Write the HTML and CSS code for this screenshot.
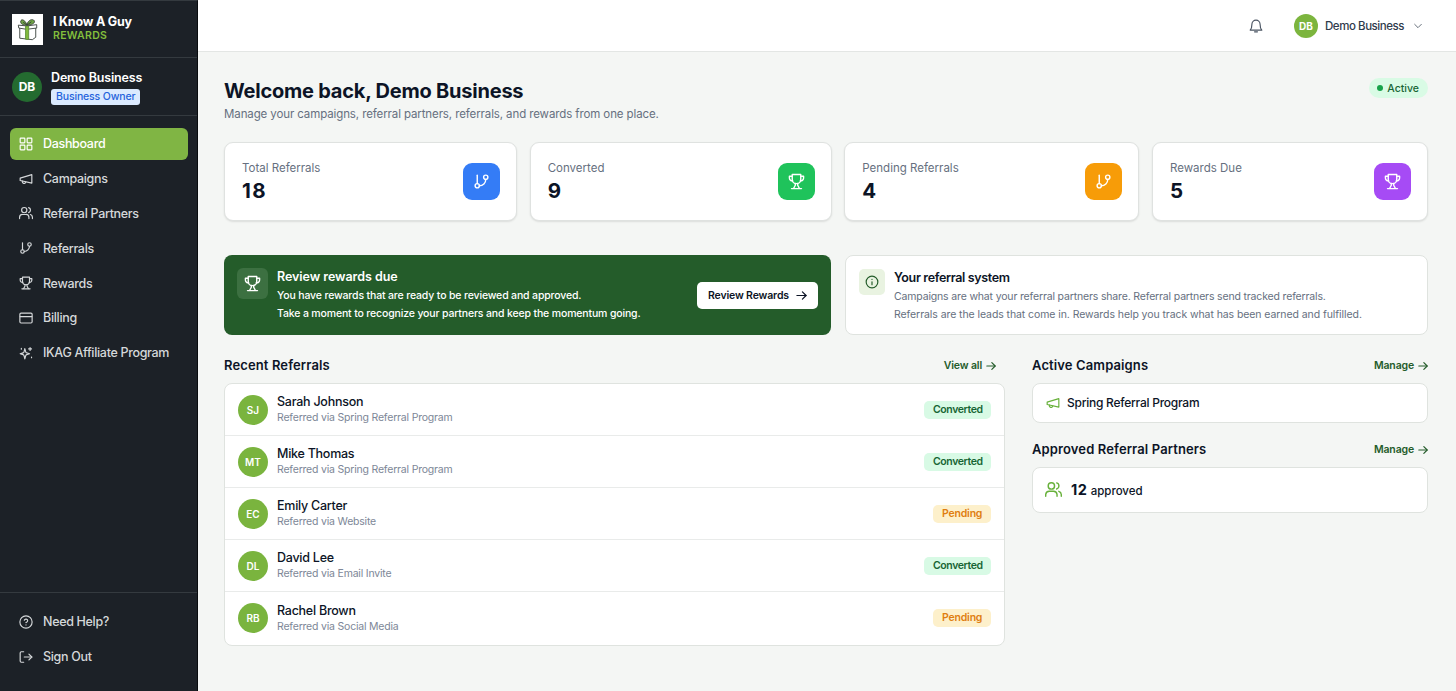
FILE: index.html
```html
<!DOCTYPE html>
<html lang="en">
<head>
<meta charset="utf-8">
<title>I Know A Guy Rewards</title>
<link rel="stylesheet" href="styles.css">
</head>
<body>
<svg class="defs" aria-hidden="true">
  <symbol id="grid" viewBox="0 0 24 24"><rect x="2" y="2" width="8" height="8" rx="1"/><rect x="14" y="2" width="8" height="8" rx="1"/><rect x="14" y="14" width="8" height="8" rx="1"/><rect x="2" y="14" width="8" height="8" rx="1"/></symbol>
  <symbol id="megaphone" viewBox="0 0 24 24"><path d="m2 10.500 20-6v14.500L2 14.500v-4z"/><path d="M11.600 17.300a3 3 0 1 1-5.800-1.600"/></symbol>
  <symbol id="users" viewBox="0 0 24 24"><path d="M17 21.500v-2.500a5 5 0 0 0-5-4.500H6a5 5 0 0 0-5 4.500v2.500"/><circle cx="9" cy="7" r="4.500"/><path d="M23 21.500v-2.500a5 5 0 0 0-3.500-4.400"/><path d="M16.500 2.700a4.500 4.500 0 0 1 0 8.600"/></symbol>
  <symbol id="branch" viewBox="0 0 24 24"><path d="M6 3v12"/><circle cx="18" cy="6" r="3"/><circle cx="6" cy="18" r="3"/><path d="M18 9a9 9 0 0 1-9 9"/></symbol>
  <symbol id="trophy" viewBox="0 0 24 24"><path d="M6 4.500H2V7a4 4 0 0 0 4.500 4"/><path d="M18 4.500h4V7a4 4 0 0 1-4.500 4"/><path d="M5 22h14"/><path d="M10.300 14.800v2.500L8 21.500M13.700 14.800v2.500l2.300 4.200"/><path d="M18 2H6v7a6 6 0 0 0 12 0V2Z"/></symbol>
  <symbol id="card" viewBox="0 0 24 24"><rect x="1.500" y="3.500" width="21" height="17" rx="2"/><path d="M2 9.500h20"/></symbol>
  <symbol id="sparkles" viewBox="0 0 24 24"><path d="M10 4.500 8.600 10a2.500 2.500 0 0 1-1.700 1.700L2 13.200l4.900 1.500a2.500 2.500 0 0 1 1.700 1.700L10 22l1.500-5.600a2.500 2.500 0 0 1 1.700-1.700l4.900-1.500-4.900-1.500a2.500 2.500 0 0 1-1.700-1.700Z"/><path d="M19 2.500v5M21.500 5h-5M4 4v1.500M21.500 19v1"/></symbol>
  <symbol id="help" viewBox="0 0 24 24"><circle cx="12" cy="12" r="10.500"/><path d="M9.090 9a3 3 0 0 1 5.830 1c0 2-3 3-3 3"/><path d="M12 17h.01"/></symbol>
  <symbol id="logout" viewBox="0 0 24 24"><path d="M8 21H4a2 2 0 0 1-2-2V5a2 2 0 0 1 2-2h4"/><path d="m17 17 5-5-5-5"/><path d="M22 12H9"/></symbol>
  <symbol id="bell" viewBox="0 0 24 24"><path d="M5 9a7 7 0 0 1 14 0c0 7 3 10 3 10H2s3-3 3-10"/><path d="M9.500 22h5"/></symbol>
  <symbol id="chevron" viewBox="0 0 24 24"><path d="m4 8 8 8 8-8"/></symbol>
  <symbol id="info" viewBox="0 0 24 24"><circle cx="12" cy="12" r="10"/><path d="M12 16.500v-5M12 7.500h.01"/></symbol>
  <symbol id="arrow" viewBox="0 0 24 24"><path d="M2 12h20"/><path d="m14 4 8 8-8 8"/></symbol>
</svg>

<div class="app">
  <aside class="sidebar">
    <div class="brand">
      <svg class="logo" viewBox="0 0 32 32">
        <g fill="none" stroke="#333b36" stroke-width=".9" stroke-linejoin="round">
          <path d="M8 14.500v10.500l13 1.500L24.500 24V14" fill="#fff"/>
          <path d="m6.500 11.500 9 .8 10-1.300v3.500L15 15.800 7 14.500Z" fill="#fff"/>
          <path d="m14 12.500 3.200-.3V26.300L14 26Z" fill="#83bb3d" stroke="#5d8f37"/>
          <path d="M15.500 11.500C12 11.500 8.500 10.500 9 7.500c.5-2.500 4-2 6.500 3.500 1-5 6-6.500 7.500-4 1.200 2.500-3 4.500-7.500 4.500Z" fill="#6fa544"/>
          <path d="M15.500 11.500 11.500 8.500m4 3 4.500-3.500"/>
        </g>
      </svg>
      <div class="brand-text"><div class="brand-name">I Know A Guy</div><div class="brand-sub">REWARDS</div></div>
    </div>
    <div class="account">
      <div class="account-avatar">DB</div>
      <div><div class="account-name">Demo Business</div><div class="role">Business Owner</div></div>
    </div>
    <nav class="nav">
      <a class="nav-item active"><svg class="icon"><use href="#grid"/></svg><span>Dashboard</span></a>
      <a class="nav-item"><svg class="icon"><use href="#megaphone"/></svg><span>Campaigns</span></a>
      <a class="nav-item"><svg class="icon"><use href="#users"/></svg><span>Referral Partners</span></a>
      <a class="nav-item"><svg class="icon"><use href="#branch"/></svg><span>Referrals</span></a>
      <a class="nav-item"><svg class="icon"><use href="#trophy"/></svg><span>Rewards</span></a>
      <a class="nav-item"><svg class="icon"><use href="#card"/></svg><span>Billing</span></a>
      <a class="nav-item"><svg class="icon"><use href="#sparkles"/></svg><span>IKAG Affiliate Program</span></a>
    </nav>
    <div class="nav nav-bottom">
      <a class="nav-item"><svg class="icon"><use href="#help"/></svg><span>Need Help?</span></a>
      <a class="nav-item"><svg class="icon"><use href="#logout"/></svg><span>Sign Out</span></a>
    </div>
  </aside>

  <div class="page">
    <header class="topbar">
      <svg class="icon bell"><use href="#bell"/></svg>
      <div class="user"><div class="user-avatar">DB</div><span class="user-name">Demo Business</span><svg class="icon chevron"><use href="#chevron"/></svg></div>
    </header>
    <main class="content">
      <div class="intro">
        <div><h1>Welcome back, Demo Business</h1><p class="lead">Manage your campaigns, referral partners, referrals, and rewards from one place.</p></div>
        <span class="status"><i class="dot"></i>Active</span>
      </div>

      <section class="stats">
        <div class="stat"><div><div class="stat-label">Total Referrals</div><div class="stat-value">18</div></div><div class="tile blue"><svg class="icon"><use href="#branch"/></svg></div></div>
        <div class="stat"><div><div class="stat-label">Converted</div><div class="stat-value">9</div></div><div class="tile green"><svg class="icon"><use href="#trophy"/></svg></div></div>
        <div class="stat"><div><div class="stat-label">Pending Referrals</div><div class="stat-value">4</div></div><div class="tile orange"><svg class="icon"><use href="#branch"/></svg></div></div>
        <div class="stat"><div><div class="stat-label">Rewards Due</div><div class="stat-value">5</div></div><div class="tile purple"><svg class="icon"><use href="#trophy"/></svg></div></div>
      </section>

      <section class="notices">
        <div class="review">
          <div class="review-icon"><svg class="icon"><use href="#trophy"/></svg></div>
          <div class="notice-text"><h2 class="notice-title">Review rewards due</h2><p>You have rewards that are ready to be reviewed and approved.<br>Take a moment to recognize your partners and keep the momentum going.</p></div>
          <button class="review-button"><span>Review Rewards</span><svg class="icon"><use href="#arrow"/></svg></button>
        </div>
        <div class="system">
          <div class="system-icon"><svg class="icon"><use href="#info"/></svg></div>
          <div class="notice-text"><h2 class="notice-title">Your referral system</h2><p><span class="tight">Campaigns are what your referral partners share. Referral partners send tracked referrals.</span><br>Referrals are the leads that come in. Rewards help you track what has been earned and fulfilled.</p></div>
        </div>
      </section>

      <section class="columns">
        <div class="recent">
          <div class="section-head"><h2>Recent Referrals</h2><a class="link"><span>View all</span><svg class="icon"><use href="#arrow"/></svg></a></div>
          <div class="list">
            <div class="row"><div class="avatar">SJ</div><div class="person"><div class="name">Sarah Johnson</div><div class="via">Referred via Spring Referral Program</div></div><span class="badge converted">Converted</span></div>
            <div class="row"><div class="avatar">MT</div><div class="person"><div class="name">Mike Thomas</div><div class="via">Referred via Spring Referral Program</div></div><span class="badge converted">Converted</span></div>
            <div class="row"><div class="avatar">EC</div><div class="person"><div class="name">Emily Carter</div><div class="via">Referred via Website</div></div><span class="badge pending">Pending</span></div>
            <div class="row"><div class="avatar">DL</div><div class="person"><div class="name">David Lee</div><div class="via">Referred via Email Invite</div></div><span class="badge converted">Converted</span></div>
            <div class="row"><div class="avatar">RB</div><div class="person"><div class="name">Rachel Brown</div><div class="via">Referred via Social Media</div></div><span class="badge pending">Pending</span></div>
          </div>
        </div>
        <div class="side">
          <div class="section-head"><h2>Active Campaigns</h2><a class="link"><span>Manage</span><svg class="icon"><use href="#arrow"/></svg></a></div>
          <div class="side-card campaign"><svg class="icon"><use href="#megaphone"/></svg><span>Spring Referral Program</span></div>
          <div class="section-head partners-head"><h2>Approved Referral Partners</h2><a class="link"><span>Manage</span><svg class="icon"><use href="#arrow"/></svg></a></div>
          <div class="side-card partners"><svg class="icon"><use href="#users"/></svg><span><b>12</b> approved</span></div>
        </div>
      </section>
    </main>
  </div>
</div>
</body>
</html>
```

FILE: styles.css
```css
* { box-sizing: border-box; }
body { margin: 0; font-family: Inter, "Liberation Sans", sans-serif; color: #0c1426; background: #f4f6f4; }
h1, h2, p { margin: 0; }
.defs { position: absolute; width: 0; height: 0; }
.icon { width: 14px; height: 14px; flex: none; fill: none; stroke: currentColor; stroke-width: 2; stroke-linecap: round; stroke-linejoin: round; }

.app { display: flex; height: 691px; overflow: hidden; }
.sidebar { width: 198px; flex: none; display: flex; flex-direction: column; background: #1c2127; border-right: 1px solid #080b0e; border-top: 1px solid #343a3f; color: #fff; }
.brand { height: 57px; display: flex; align-items: center; gap: 10px; padding-left: 12px; border-bottom: 1px solid #343a3f; }
.logo { width: 31px; height: 31px; background: #fff; }
.brand-text { margin-top: -1px; }
.brand-name { font-size: 12.500px; line-height: 14px; font-weight: 700; letter-spacing: -.2px; }
.brand-sub { font-size: 10.500px; line-height: 13px; font-weight: 600; letter-spacing: .3px; color: #82be3c; }
.account { height: 58px; display: flex; align-items: center; gap: 9px; padding-left: 12px; border-bottom: 1px solid #343a3f; }
.account-avatar { width: 30px; height: 30px; border-radius: 50%; background: #246b30; display: grid; place-items: center; font-size: 12px; font-weight: 700; }
.account-name { font-size: 12.500px; line-height: 16px; margin-top: 1px; font-weight: 600; letter-spacing: -.15px; }
.role { width: max-content; margin-top: 3px; padding: 0 5px; border-radius: 3px; background: #dbeafe; color: #2563dc; font-size: 10.500px; line-height: 16px; font-weight: 500; letter-spacing: -.15px; }
.nav { display: flex; flex-direction: column; gap: 2px; padding: 11.500px 9px 0 10px; }
.nav-item { height: 32.800px; display: flex; align-items: center; gap: 10px; padding-left: 9px; border-radius: 6px; color: #d5d8da; font-size: 12.500px; font-weight: 500; letter-spacing: -.32px; }
.nav-item.active { background: #80b544; color: #fff; }
.nav-bottom { margin-top: auto; height: 99px; padding-top: 12.500px; border-top: 1px solid #343a3f; }

.page { flex: 1; min-width: 0; display: flex; flex-direction: column; }
.topbar { height: 52px; display: flex; align-items: center; justify-content: flex-end; padding-right: 33px; background: #fff; border-bottom: 1px solid #e3e6e4; color: #4b5563; }
.bell { margin-right: 31px; }
.user { display: flex; align-items: center; }
.user-avatar { width: 24px; height: 24px; border-radius: 50%; background: #7cb53e; color: #fff; display: grid; place-items: center; font-size: 10px; font-weight: 700; }
.user-name { width: 79px; white-space: nowrap; margin-left: 7px; font-size: 11.500px; font-weight: 500; letter-spacing: -.45px; color: #303b4c; }
.chevron { width: 10px; height: 10px; margin-left: 9px; }

.content { padding: 26px 28px 0 26px; }
.intro { height: 64px; display: flex; justify-content: space-between; align-items: flex-start; }
h1 { font-size: 20px; line-height: 26px; font-weight: 700; letter-spacing: -.22px; }
.lead { margin-top: 3px; font-size: 11.500px; line-height: 14px; letter-spacing: -.11px; color: #667080; }
.status { height: 20px; display: flex; align-items: center; gap: 4px; padding: 0 9px 0 8px; border-radius: 10px; background: #d9fbe5; color: #176534; font-size: 10.500px; font-weight: 500; }
.dot { width: 6px; height: 6px; border-radius: 50%; background: #17a34a; }

.stats { display: grid; grid-template-columns: 293px 302px 295px 276px; justify-content: space-between; }
.stat { height: 79px; display: flex; justify-content: space-between; align-items: center; padding: 0 16px 0 17px; background: #fff; border: 1px solid #dfe2e0; border-radius: 9px; box-shadow: 0 1px 2px #0000001a; }
.stat-label { font-size: 11.500px; line-height: 16px; margin-top: -1px; color: #667080; }
.stat-value { font-size: 20.500px; line-height: 24px; margin-top: 3px; font-weight: 700; letter-spacing: 1.500px; }
.tile { width: 37px; height: 37px; display: grid; place-items: center; border-radius: 9px; color: #fff; }
.tile .icon { width: 17px; height: 17px; }
.blue { background: #347cf6; }
.green { background: #1fc35b; }
.orange { background: #f79c08; }
.purple { background: #a64bf5; }

.notices { margin-top: 34px; display: grid; grid-template-columns: 607px 583px; justify-content: space-between; }
.review, .system { height: 80px; display: flex; align-items: flex-start; border-radius: 8px; padding: 13px; }
.review { background: #245c2a; color: #fff; }
.review-icon { width: 31px; height: 31px; border-radius: 6px; background: #3c7041; display: grid; place-items: center; }
.review-icon .icon { width: 17px; height: 17px; }
.notice-text { flex: 1; }
.notice-title { font-size: 12.500px; line-height: 17px; font-weight: 600; letter-spacing: -.05px; }
.notice-text p { margin-top: 2px; font-size: 10.500px; line-height: 18px; white-space: nowrap; letter-spacing: -.08px; }
.review .notice-text { margin-left: 9px; }
.review p { font-weight: 500; letter-spacing: -.15px; }
.review-button { align-self: center; width: 121px; height: 27px; display: flex; align-items: center; justify-content: space-between; padding: 0 11px; border: 0; border-radius: 5px; background: #fff; color: #0c1426; font: 600 10.500px Inter, sans-serif; letter-spacing: -.15px; white-space: nowrap; }
.review-button .icon { width: 11px; height: 11px; stroke-width: 2.600; }
.system { background: #fff; border: 1px solid #dfe3df; }
.system-icon { width: 26px; height: 26px; border-radius: 5px; background: #e9f3e1; color: #245c2a; display: grid; place-items: center; }
.system .notice-text { margin-left: 9px; }
.system .notice-title { letter-spacing: -.35px; }
.system p { color: #667080; }
.tight { letter-spacing: -.16px; }

.columns { margin-top: 21px; display: grid; grid-template-columns: 781px 396px; justify-content: space-between; }
.section-head { height: 27px; display: flex; justify-content: space-between; align-items: flex-start; }
h2 { font-size: 13px; line-height: 19px; font-weight: 600; letter-spacing: .12px; }
.link { display: flex; align-items: center; gap: 4px; font-size: 10.500px; line-height: 19px; font-weight: 600; letter-spacing: -.15px; color: #245c2a; }
.link .icon { width: 10px; height: 10px; stroke-width: 2.800; }
.recent .link { margin-right: 9px; }
.list, .side-card { background: #fff; border: 1px solid #dfe3df; border-radius: 8px; }
.list { height: 263px; }
.row { height: 52px; display: flex; align-items: center; padding: 0 13px; border-bottom: 1px solid #e9ebea; }
.row:last-child { border-bottom: 0; }
.avatar { width: 30px; height: 30px; border-radius: 50%; background: #7ab43e; color: #fff; display: grid; place-items: center; font-size: 10px; font-weight: 600; }
.person { flex: 1; margin-left: 9px; padding-top: 1px; }
.name { font-size: 12.500px; line-height: 16px; font-weight: 500; letter-spacing: -.25px; }
.via { font-size: 10.500px; line-height: 16px; letter-spacing: -.2px; color: #7d8797; }
.badge { height: 18px; line-height: 18px; padding: 0 9px; border-radius: 5px; font-size: 10.500px; font-weight: 600; letter-spacing: -.4px; }
.converted { width: 67px; background: #d8fae5; color: #176534; }
.pending { width: 58px; letter-spacing: -.2px; background: #fdf0cb; color: #df7e10; }
.side-card { display: flex; align-items: center; padding: 0 13px; font-size: 12.500px; font-weight: 500; }
.side-card .icon { color: #68b13b; }
.campaign { height: 40px; gap: 7px; padding-bottom: 1px; font-size: 12px; letter-spacing: -.25px; }
.partners-head { margin-top: 17px; }
.partners { height: 46px; gap: 9px; padding: 0 12px 1px; font-size: 11.500px; }
.partners .icon { width: 17px; height: 17px; }
.partners b { font-size: 14.500px; font-weight: 700; letter-spacing: .6px; }
```
